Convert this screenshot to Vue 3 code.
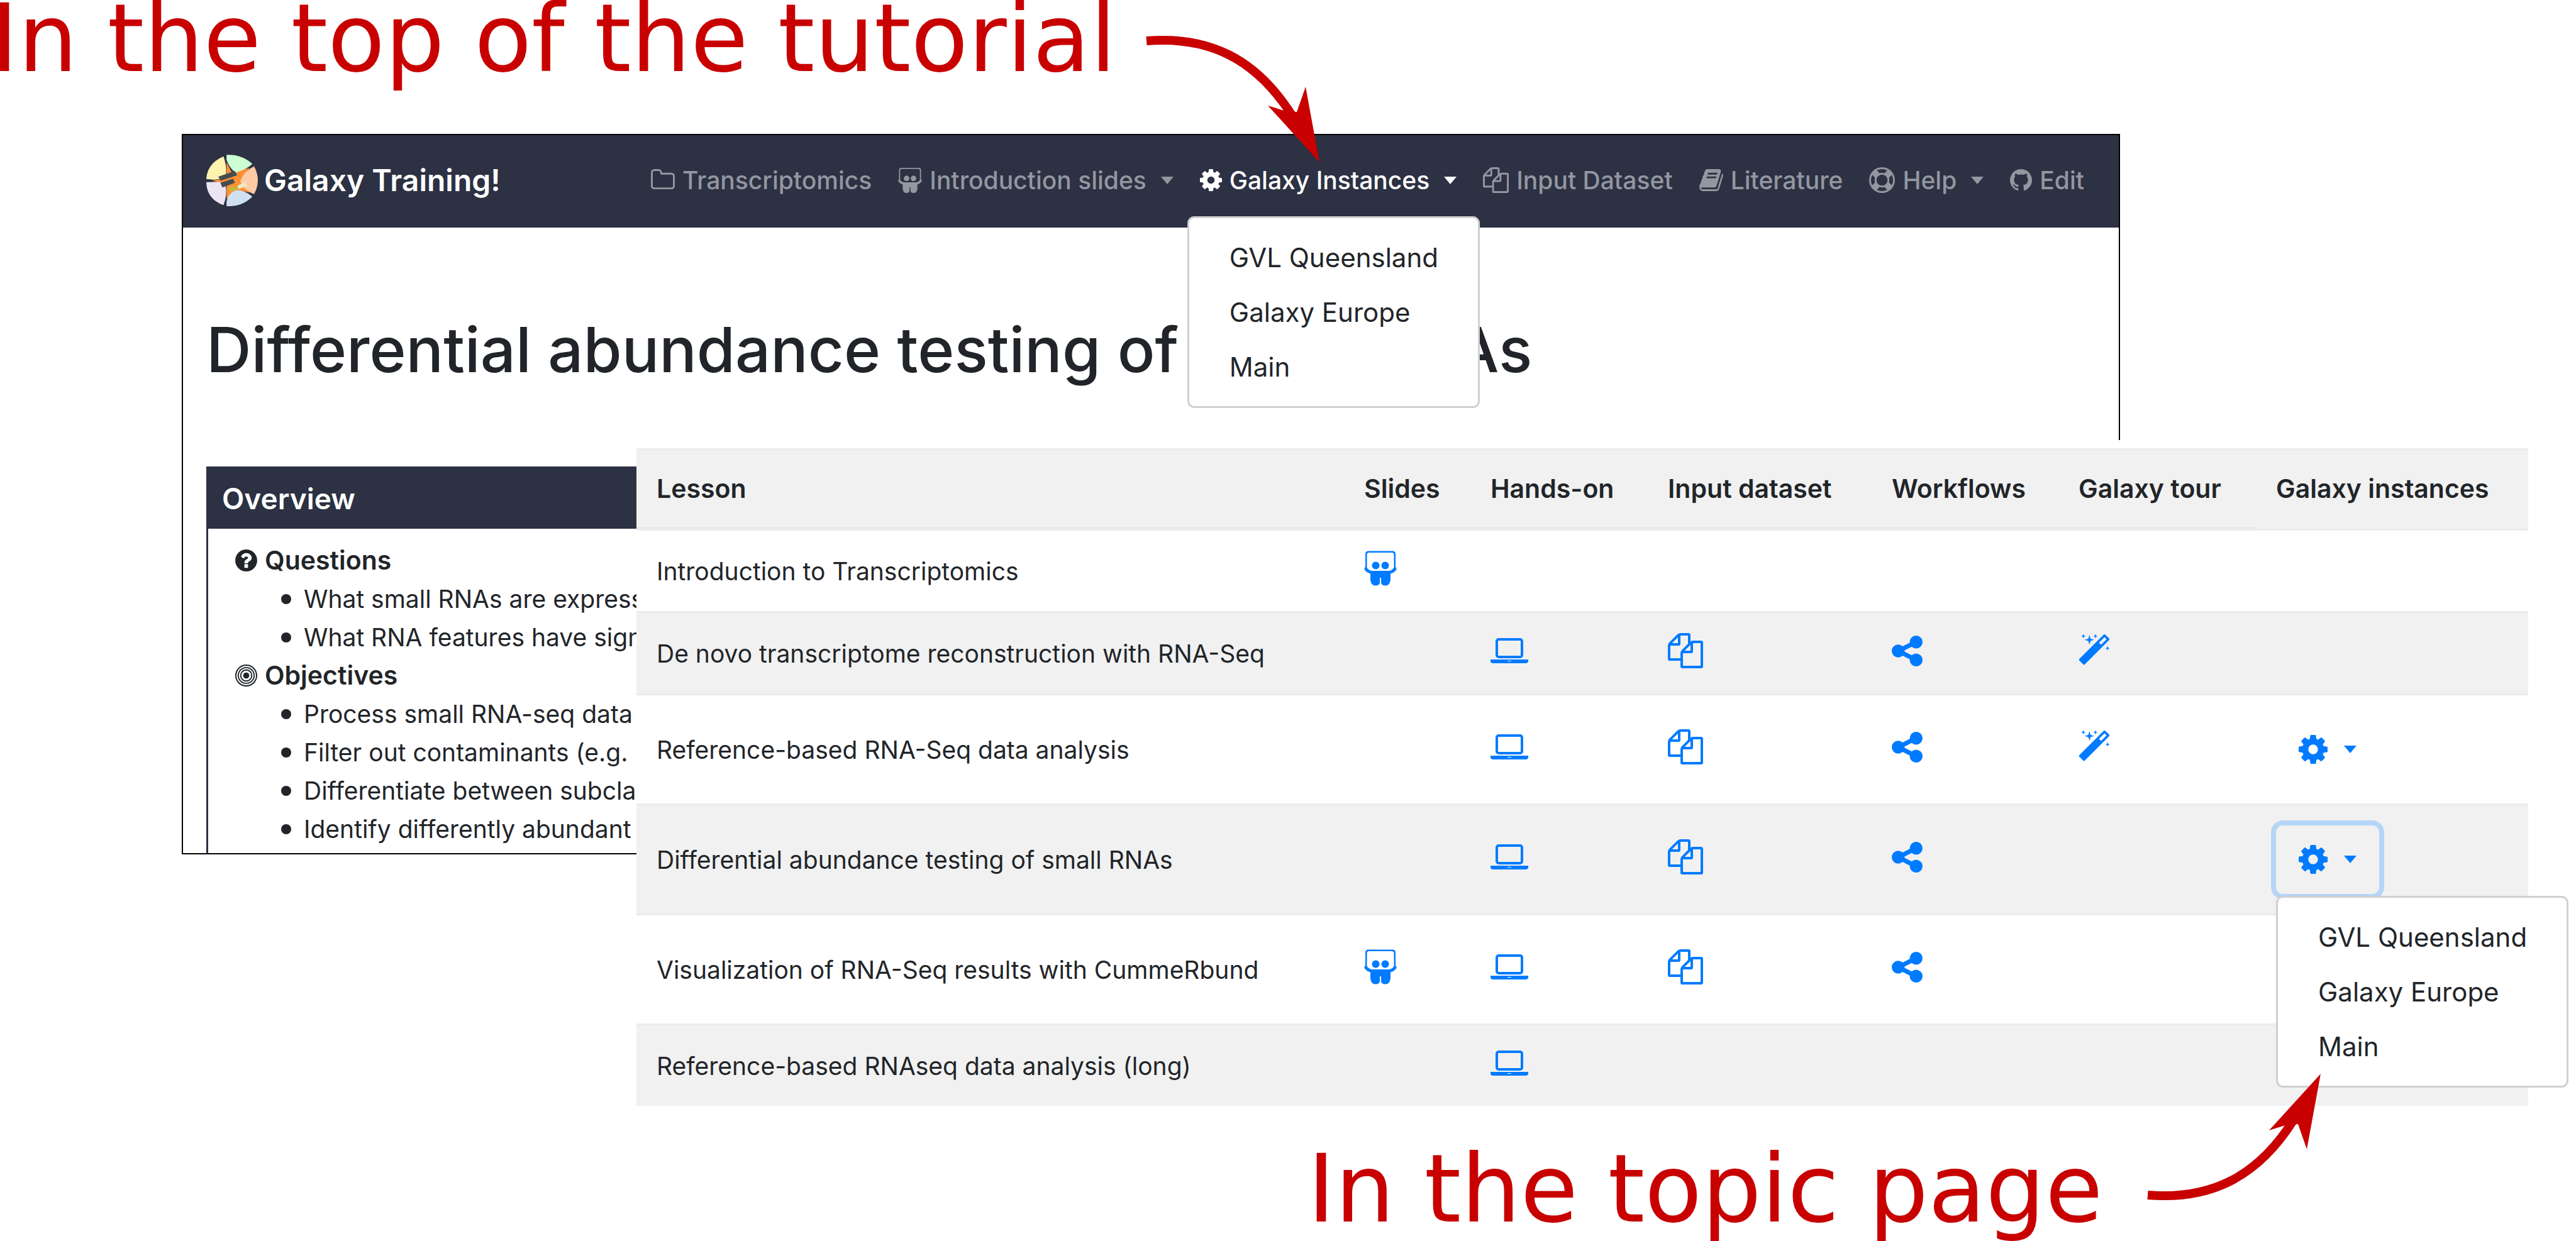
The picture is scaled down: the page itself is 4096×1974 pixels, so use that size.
<script setup>
const icons = {
  folder: {
    box: '64 128 1664 1536',
    d: ['M1600 1312v-704q0-40-28-68t-68-28h-704q-40 0-68-28t-28-68v-64q0-40-28-68t-68-28h-320q-40 0-68 28t-28 68v960q0 40 28 68t68 28h1216q40 0 68-28t28-68zm128-704v704q0 92-66 158t-158 66h-1216q-92 0-158-66t-66-158v-960q0-92 66-158t158-66h320q92 0 158 66t66 158v32h672q92 0 158 66t66 158z'],
  },
  slides: {
    box: '0 0 104 112',
    d: [
      'M14 1H90Q100 1 100 11V52Q104 54 103 60Q96 70 84 73V92Q82 111 68 111Q56 111 54 102V86H50V102Q48 111 36 111Q22 111 20 92V73Q8 70 1 60Q0 54 4 52V11Q4 1 14 1ZM16 6Q9 6 9 13V54Q16 65 30 64H74Q88 65 95 54V13Q95 6 88 6Z',
      'M37 35a12 12 0 1 0 .1 0ZM67 35a12 12 0 1 0 .1 0Z',
    ],
  },
  cog: {
    box: '128 128 1536 1536',
    d: ['M1152 896q0-106-75-181t-181-75-181 75-75 181 75 181 181 75 181-75 75-181zm512-109v222q0 12-8 23t-20 13l-185 28q-19 54-39 91 35 50 107 138 10 12 10 25t-9 23q-27 37-99 108t-94 71q-12 0-26-9l-138-108q-44 23-91 38-16 136-29 186-7 28-36 28h-222q-14 0-24.5-8.5t-11.5-21.5l-28-184q-49-16-90-37l-141 107q-10 9-25 9-14 0-25-11-126-114-165-168-7-10-7-23 0-12 8-23 15-21 51-66.5t54-70.5q-27-50-41-99l-183-27q-13-2-21-12.5t-8-23.5v-222q0-12 8-23t19-13l186-28q14-46 39-92-40-57-107-138-10-12-10-24 0-10 9-23 26-36 98.5-107.5t94.5-71.5q13 0 26 10l138 107q44-23 91-38 16-136 29-186 7-28 36-28h222q14 0 24.5 8.5t11.5 21.5l28 184q49 16 90 37l142-107q9-9 24-9 13 0 25 10 129 119 165 170 7 8 7 22 0 12-8 23-15 21-51 66.5t-54 70.5q26 50 41 98l183 28q13 2 21 12.5t8 23.5z'],
  },
  files: {
    box: '0 0 1792 1792',
    d: ['M1696 384q40 0 68 28t28 68v1216q0 40-28 68t-68 28h-960q-40 0-68-28t-28-68v-288h-544q-40 0-68-28t-28-68v-672q0-40 20-88t48-76l408-408q28-28 76-48t88-20h416q40 0 68 28t28 68v328q68-40 128-40h416zm-544 213l-299 299h299v-299zm-640-384l-299 299h299v-299zm196 647l316-316v-416h-384v416q0 40-28 68t-68 28h-416v640h512v-256q0-40 20-88t48-76zm956 804v-1152h-384v416q0 40-28 68t-68 28h-416v640h896z'],
  },
  book: {
    box: '64 128 1664 1536',
    d: ['M1703 478q40 57 18 129l-275 906q-19 64-76.5 107.5t-122.5 43.5h-923q-77 0-148.5-53.5t-99.5-131.5q-24-67-2-127 0-4 3-27t4-37q1-8-3-21.5t-3-19.5q2-11 8-21t16.5-23.5 16.5-23.5q23-38 45-91.5t30-91.5q3-10 .5-30t-.5-28q3-11 17-28t17-23q21-36 42-92t25-90q1-9-2.5-32t.5-28q4-13 22-30.5t22-22.5q19-26 42.5-84.5t27.5-96.5q1-8-3-25.5t-2-26.5q2-8 9-18t18-23 17-21q8-12 16.5-30.5t15-35 16-36 19.5-32 26.5-23.5 36-11.5 47.5 5.5l-1 3q38-9 51-9h761q74 0 114 56t18 130l-274 906q-36 119-71.5 153.5t-128.5 34.5h-869q-27 0-38 15-11 16-1 43 24 70 144 70h923q29 0 56-15.5t35-41.5l300-987q7-22 5-57 38 15 59 43zm-1064 2q-4 13 2 22.5t20 9.5h608q13 0 25.5-9.5t16.5-22.5l21-64q4-13-2-22.5t-20-9.5h-608q-13 0-25.5 9.5t-16.5 22.5zm-83 256q-4 13 2 22.5t20 9.5h608q13 0 25.5-9.5t16.5-22.5l21-64q4-13-2-22.5t-20-9.5h-608q-13 0-25.5 9.5t-16.5 22.5z'],
  },
  ring: {
    box: '0 0 1792 1792',
    d: ['M896 0q182 0 348 71t286 191 191 286 71 348-71 348-191 286-286 191-348 71-348-71-286-191-191-286-71-348 71-348 191-286 286-191 348-71zm0 128q-190 0-361 90l194 194q82-28 167-28t167 28l194-194q-171-90-361-90zm-678 1129l194-194q-28-82-28-167t28-167l-194-194q-90 171-90 361t90 361zm678 407q190 0 361-90l-194-194q-82 28-167 28t-167-28l-194 194q171 90 361 90zm0-384q159 0 271.5-112.5t112.5-271.5-112.5-271.5-271.5-112.5-271.5 112.5-112.5 271.5 112.5 271.5 271.5 112.5zm484-217l194 194q90-171 90-361t-90-361l-194 194q28 82 28 167t-28 167z'],
  },
  github: {
    box: '128 128 1536 1536',
    d: ['M896 128q209 0 385.500 103t279.500 279.500 103 385.500q0 251-146.500 451.500t-378.500 277.500q-27 5-40-7t-13-30q0-3 .5-76.500t.5-134.500q0-97-52-142 57-6 102.500-18t94-39 81-66.500 53-105 20.500-150.500q0-119-79-206 37-91-8-204-28-9-81 11t-92 44l-38 24q-93-26-192-26t-192 26q-16-11-42.500-27t-83.500-38.500-85-13.500q-45 113-8 204-79 87-79 206 0 85 20.500 150t52.500 105 80.500 67 94 39 102.500 18q-39 36-49 103-21 10-45 15t-57 5-65.500-21.500-55.500-62.500q-19-32-48.500-52t-49.500-24l-20-3q-21 0-29 4.500t-5 11.500 9 14 13 12l7 5q22 10 43.500 38t31.500 51l10 23q13 38 44 61.500t67 30 69.500 7 55.500-3.500l23-4q0 38 .5 88.500t.5 54.500q0 18-13 30t-40 7q-232-77-378.500-277.500t-146.500-451.500q0-209 103-385.500t279.500-279.500 385.500-103z'],
  },
  question: {
    box: '128 128 1536 1536',
    d: ['M1024 1376v-192q0-14-9-23t-23-9h-192q-14 0-23 9t-9 23v192q0 14 9 23t23 9h192q14 0 23-9t9-23zm256-672q0-88-55.500-163t-138.500-116-170-41q-243 0-371 213-15 24 8 42l132 100q7 6 19 6 16 0 25-12 53-68 86-92 34-24 86-24 48 0 85.500 26t37.500 59q0 38-20 61t-68 45q-63 28-115.500 86.500t-52.500 125.500v36q0 14 9 23t23 9h192q14 0 23-9t9-23q0-19 21.500-49.500t54.500-49.500q32-18 49-28.500t46-35 44.500-48 28-60.500 12.500-81zm384 192q0 209-103 385.500t-279.500 279.500-385.500 103-385.500-103-279.500-279.500-103-385.500 103-385.500 279.500-279.500 385.500-103 385.500 103 279.500 279.500 103 385.500z'],
  },
  bullseye: {
    box: '0 0 36 36',
    d: [
      'M18 0a18 18 0 1 0 .01 0ZM18 2a16 16 0 1 1 -.01 0Z',
      'M18 4a14 14 0 1 0 .01 0ZM18 6a12 12 0 1 1 -.01 0Z',
      'M18 8a10 10 0 1 0 .01 0ZM18 10a8 8 0 1 1 -.01 0Z',
      'M18 13a5 5 0 1 0 .01 0Z',
    ],
  },
  laptop: {
    box: '0 128 1920 1280',
    d: ['M416 1152q-66 0-113-47t-47-113v-704q0-66 47-113t113-47h1088q66 0 113 47t47 113v704q0 66-47 113t-113 47h-1088zm-32-864v704q0 13 9.500 22.500t22.500 9.500h1088q13 0 22.500-9.500t9.500-22.500v-704q0-13-9.500-22.500t-22.500-9.500h-1088q-13 0-22.500 9.500t-9.500 22.500zm1376 928h160v96q0 40-47 68t-113 28h-1600q-66 0-113-28t-47-68v-96h1760zm-720 96q16 0 16-16t-16-16h-160q-16 0-16 16t16 16h160z'],
  },
  share: {
    box: '128 128 1536 1536',
    d: ['M1344 1024q133 0 226.500 93.500t93.500 226.500-93.500 226.500-226.500 93.500-226.500-93.500-93.500-226.500q0-12 2-34l-360-180q-92 86-218 86-133 0-226.500-93.500t-93.500-226.500 93.500-226.500 226.500-93.500q126 0 218 86l360-180q-2-22-2-34 0-133 93.500-226.500t226.500-93.500 226.500 93.500 93.500 226.500-93.500 226.500-226.500 93.500q-126 0-218-86l-360 180q2 22 2 34t-2 34l360 180q92-86 218-86z'],
  },
  magic: {
    box: '64 0 1664 1792',
    d: ['M1254 581l293-293-107-107-293 293zm447-293q0 27-18 45l-1286 1286q-18 18-45 18t-45-18l-198-198q-18-18-18-45t18-45l1286-1286q18-18 45-18t45 18l198 198q18 18 18 45zm-1351-190l98 30-98 30-30 98-30-98-98-30 98-30 30-98zm350 162l196 60-196 60-60 196-60-196-196-60 196-60 60-196zm930 478l98 30-98 30-30 98-30-98-98-30 98-30 30-98zm-640-640l98 30-98 30-30 98-30-98-98-30 98-30 30-98z'],
  },
}

const instances = ['GVL Queensland', 'Galaxy Europe', 'Main']

const nav = [
  { icon: 'folder', text: 'Transcriptomics' },
  { icon: 'slides', text: 'Introduction slides', menu: true },
  { icon: 'cog', text: 'Galaxy Instances', menu: true, open: true },
  { icon: 'files', text: 'Input Dataset' },
  { icon: 'book', text: 'Literature' },
  { icon: 'ring', text: 'Help', menu: true },
  { icon: 'github', text: 'Edit' },
]

const overview = [
  {
    icon: 'question',
    title: 'Questions',
    items: ['What small RNAs are express', 'What RNA features have sign'],
  },
  {
    icon: 'bullseye',
    title: 'Objectives',
    items: [
      'Process small RNA-seq data',
      'Filter out contaminants (e.g.',
      'Differentiate between subcla',
      'Identify differently abundant',
    ],
  },
]

const columns = [
  { key: 'slides', title: 'Slides', icon: 'slides' },
  { key: 'hands', title: 'Hands-on', icon: 'laptop' },
  { key: 'input', title: 'Input dataset', icon: 'files' },
  { key: 'flows', title: 'Workflows', icon: 'share' },
  { key: 'tour', title: 'Galaxy tour', icon: 'magic' },
]

const lessons = [
  { title: 'Introduction to Transcriptomics', has: ['slides'] },
  { title: 'De novo transcriptome reconstruction with RNA-Seq', has: ['hands', 'input', 'flows', 'tour'] },
  { title: 'Reference-based RNA-Seq data analysis', has: ['hands', 'input', 'flows', 'tour'], menu: true },
  { title: 'Differential abundance testing of small RNAs', has: ['hands', 'input', 'flows'], menu: true, open: true },
  { title: 'Visualization of RNA-Seq results with CummeRbund', has: ['slides', 'hands', 'input', 'flows'], tall: true },
  { title: 'Reference-based RNAseq data analysis (long)', has: ['hands'] },
]
</script>

<template>
  <main class="page">
    <div class="note note-top">
      <p class="note-text">In the top of the tutorial</p>
      <svg class="arrow" viewBox="0 0 284 204" aria-hidden="true">
        <path class="arrow-line" d="M4 9C102 1 177 36 235 127" />
        <path class="arrow-head" d="M279 202L197 112L226 121L243 122L257 82Z" />
      </svg>
    </div>

    <section class="tutorial">
      <nav class="navbar">
        <a class="brand" href="#">
          <svg class="logo" viewBox="24 26 300 300" aria-hidden="true">
            <path fill="#ff8f33" d="M142 70L172 128L276 104L226 170L278 246L200 232L142 282L142 200L60 178L142 160Z" />
            <path fill="#fff3b0" d="M124 36Q148 100 136 160L70 172L24 168Q30 76 124 36Z" />
            <path fill="#ccffd4" d="M142 27Q230 22 292 80Q260 112 194 130Q158 104 142 56Z" />
            <path fill="#ffcba6" d="M302 94Q346 176 302 256Q240 232 222 178Q242 124 302 94Z" />
            <path fill="#cfe0f2" d="M142 326Q232 330 292 270Q250 234 200 232Q150 250 142 300Z" />
            <path fill="#ebe4f2" d="M24 186Q26 284 124 320Q148 262 136 200L100 184Z" />
            <path fill="#454d50" d="M94 154L190 121L204 146L108 178ZM106 190L180 166L190 190L118 217Z" />
            <path fill="#c9b53c" d="M152 218L206 206L212 226L166 243Z" />
            <path fill="#eee9c0" d="M206 206L252 182L258 210L212 226Z" />
          </svg>
          Galaxy Training!
        </a>
        <ul class="nav-list">
          <li v-for="item in nav" :key="item.text" class="nav-item" :class="{ active: item.open }">
            <a class="nav-link" href="#">
              <svg class="nav-icon" :class="'nav-' + item.icon" :viewBox="icons[item.icon].box" aria-hidden="true">
                <path v-for="d in icons[item.icon].d" :key="d" :d="d" fill-rule="evenodd" />
              </svg>
              {{ item.text }}
              <span v-if="item.menu" class="caret"></span>
            </a>
            <div v-if="item.open" class="menu nav-menu">
              <a v-for="name in instances" :key="name" class="menu-item" href="#">{{ name }}</a>
            </div>
          </li>
        </ul>
      </nav>

      <h1 class="title">Differential abundance testing of small RNAs</h1>

      <div class="overview">
        <h2 class="overview-title">Overview</h2>
        <div v-for="part in overview" :key="part.title" class="part">
          <h3 class="part-title">
            <svg class="part-icon" :viewBox="icons[part.icon].box" aria-hidden="true">
              <path v-for="d in icons[part.icon].d" :key="d" :d="d" fill-rule="evenodd" />
            </svg>
            {{ part.title }}
          </h3>
          <ul class="part-list">
            <li v-for="line in part.items" :key="line" class="part-line">{{ line }}</li>
          </ul>
        </div>
      </div>
    </section>

    <section class="topic">
      <table class="lessons">
        <colgroup>
          <col />
          <col class="col-slides" />
          <col class="col-hands" />
          <col class="col-input" />
          <col class="col-flows" />
          <col class="col-tour" />
          <col class="col-menu" />
        </colgroup>
        <thead>
          <tr>
            <th scope="col">Lesson</th>
            <th v-for="col in columns" :key="col.key" scope="col">{{ col.title }}</th>
            <th scope="col">Galaxy instances</th>
          </tr>
        </thead>
        <tbody>
          <tr v-for="row in lessons" :key="row.title" :class="{ tall: row.menu || row.tall }">
            <td>{{ row.title }}</td>
            <td v-for="col in columns" :key="col.key">
              <a v-if="row.has.includes(col.key)" class="cell-link" href="#" :aria-label="col.title">
                <svg :class="'cell-' + col.icon" :viewBox="icons[col.icon].box" aria-hidden="true">
                  <path v-for="d in icons[col.icon].d" :key="d" :d="d" fill-rule="evenodd" />
                </svg>
              </a>
            </td>
            <td>
              <div v-if="row.menu" class="dropdown">
                <button class="toggle" :class="{ focused: row.open }" type="button" aria-label="Galaxy instances">
                  <svg class="toggle-icon" :viewBox="icons.cog.box" aria-hidden="true">
                    <path :d="icons.cog.d[0]" fill-rule="evenodd" />
                  </svg>
                  <span class="caret"></span>
                </button>
                <div v-if="row.open" class="menu row-menu">
                  <a v-for="name in instances" :key="name" class="menu-item" href="#">{{ name }}</a>
                </div>
              </div>
            </td>
          </tr>
        </tbody>
      </table>
    </section>

    <div class="note note-bottom">
      <p class="note-text">In the topic page</p>
      <svg class="arrow" viewBox="0 0 284 204" aria-hidden="true">
        <g transform="matrix(1 0 0 -1 0 204)">
          <path class="arrow-line" d="M4 9C102 1 177 36 235 127" />
          <path class="arrow-head" d="M279 202L197 112L226 121L243 122L257 82Z" />
        </g>
      </svg>
    </div>
  </main>
</template>

<style>
body {
  margin: 0;
}
</style>

<style scoped>
.page {
  min-height: 100vh;
  overflow: hidden;
  background: #fff;
  color: #212529;
  font-family: Inter, "Liberation Sans", sans-serif;
  font-size: 39px;
}

a {
  color: inherit;
  text-decoration: none;
}

ul,
h1,
h2,
h3,
p {
  margin: 0;
  padding: 0;
}

svg {
  flex: none;
  fill: currentColor;
}

/* Red notes */
.note {
  position: relative;
  z-index: 5;
  display: flex;
  align-items: flex-start;
  color: #c80000;
  font-family: "DejaVu Sans", sans-serif;
  font-size: 149px;
  line-height: 124px;
  white-space: nowrap;
}

.note-top {
  gap: 44px;
  height: 213px;
  margin-left: -15px;
}

.note-top .arrow {
  margin-top: 56px;
}

.note-bottom {
  gap: 67px;
  height: 145px;
  margin-top: 71px;
  margin-left: 2079px;
}

.note-bottom .arrow {
  margin-top: -124px;
}

.arrow {
  width: 284px;
  height: 204px;
}

.arrow-line {
  fill: none;
  stroke: currentColor;
  stroke-width: 14;
}

/* Tutorial window */
.tutorial {
  margin-right: 725px;
  margin-left: 289px;
  border: 2px solid #000;
}

.navbar {
  box-sizing: border-box;
  display: flex;
  align-items: center;
  justify-content: space-between;
  height: 147px;
  padding: 0 55px 4px 37px;
  background: #2c3143;
}

.brand {
  display: flex;
  align-items: center;
  gap: 10px;
  color: #fff;
  font-size: 48px;
  font-weight: 600;
  white-space: nowrap;
}

.logo {
  width: 82px;
  height: 82px;
}

.nav-list {
  display: flex;
  gap: 42px;
  list-style: none;
}

.nav-item {
  position: relative;
  color: #9496a0;
  font-weight: 500;
}

.nav-item.active {
  color: #fff;
}

.nav-link {
  display: flex;
  align-items: center;
  gap: 12px;
  line-height: 65px;
  white-space: nowrap;
}

.nav-icon {
  width: 35px;
  height: 35px;
}

.nav-folder,
.nav-slides,
.nav-book {
  width: 38px;
}

.nav-slides {
  height: 42px;
}

.nav-files,
.nav-ring {
  width: 41px;
  height: 41px;
}

.caret {
  width: 0;
  margin-left: 11px;
  border-top: 12px solid currentColor;
  border-right: 10px solid transparent;
  border-left: 10px solid transparent;
}

.menu {
  position: absolute;
  z-index: 3;
  box-sizing: border-box;
  width: 465px;
  padding: 19px 0;
  border: 3px solid #d0d0d0;
  border-radius: 11px;
  background: #fff;
  color: #212529;
  font-size: 42px;
  font-weight: 400;
}

.menu-item {
  display: block;
  padding: 0 64px;
  line-height: 87px;
  white-space: nowrap;
}

.nav-menu {
  top: 100%;
  left: -20px;
  margin-top: 25px;
}

.title {
  margin-left: 37px;
  padding: 132px 0 124px;
  font-size: 99px;
  font-weight: 500;
  line-height: 124px;
  white-space: nowrap;
}

.overview {
  margin: 0 37px;
  padding-bottom: 8px;
  border: 3px solid #2c3143;
  border-bottom: 0;
}

.overview-title {
  margin-bottom: 20px;
  padding-left: 22px;
  background: #2c3143;
  color: #fff;
  font-size: 46px;
  font-weight: 600;
  line-height: 96px;
}

.part {
  padding-left: 43px;
  line-height: 61px;
}

.part-title {
  display: flex;
  align-items: center;
  gap: 12px;
  font-size: 41px;
  font-weight: 600;
}

.part-icon {
  width: 35px;
  height: 35px;
}

.part-list {
  padding-left: 73px;
  list-style: none;
}

.part-line {
  display: flex;
  align-items: center;
  gap: 20px;
}

.part-line::before {
  width: 16px;
  height: 16px;
  border-radius: 50%;
  background: currentColor;
  content: "";
}

/* Topic table */
.topic {
  position: relative;
  z-index: 2;
  margin-top: -659px;
  margin-left: 1012px;
  padding: 13px 76px 0 0;
  background: #fff;
}

.lessons {
  width: 100%;
  border-spacing: 0;
  table-layout: fixed;
}

.col-slides {
  width: 201px;
}

.col-hands {
  width: 282px;
}

.col-input {
  width: 356px;
}

.col-flows {
  width: 297px;
}

.col-tour {
  width: 314px;
}

.col-menu {
  width: 433px;
}

th,
td {
  box-sizing: border-box;
  height: 131px;
  padding: 0 32px;
  border-top: 3px solid #e9ecef;
  text-align: left;
  vertical-align: middle;
  white-space: nowrap;
}

th {
  height: 128px;
  border-bottom: 3px solid #e6e9eb;
  background: #f1f1f1;
  font-size: 41px;
  font-weight: 600;
}

th:last-child {
  border-bottom-color: #f1f1f1;
}

tbody tr:nth-child(even) {
  background: #f1f1f1;
}

.tall td {
  height: 175px;
}

.cell-link {
  display: flex;
  align-items: center;
  height: 62px;
  margin-bottom: 8px;
  color: #007bff;
}

.cell-slides {
  width: 52px;
  height: 56px;
}

.cell-laptop {
  width: 60px;
  height: 40px;
}

.cell-files {
  width: 56px;
  height: 56px;
}

.cell-share {
  width: 49px;
  height: 49px;
}

.cell-magic {
  width: 50px;
  height: 54px;
}

.dropdown {
  position: relative;
}

.toggle {
  display: flex;
  align-items: center;
  justify-content: space-between;
  width: 164px;
  height: 109px;
  padding: 0 36px;
  border: 0;
  border-radius: 11px;
  background: none;
  color: #007bff;
}

.toggle .caret {
  margin: 0;
}

.toggle.focused {
  box-shadow: 0 0 0 8px #b6d5f6;
}

.toggle-icon {
  width: 46px;
  height: 46px;
}

.row-menu {
  top: 100%;
  left: 0;
  margin-top: 3px;
}
</style>
